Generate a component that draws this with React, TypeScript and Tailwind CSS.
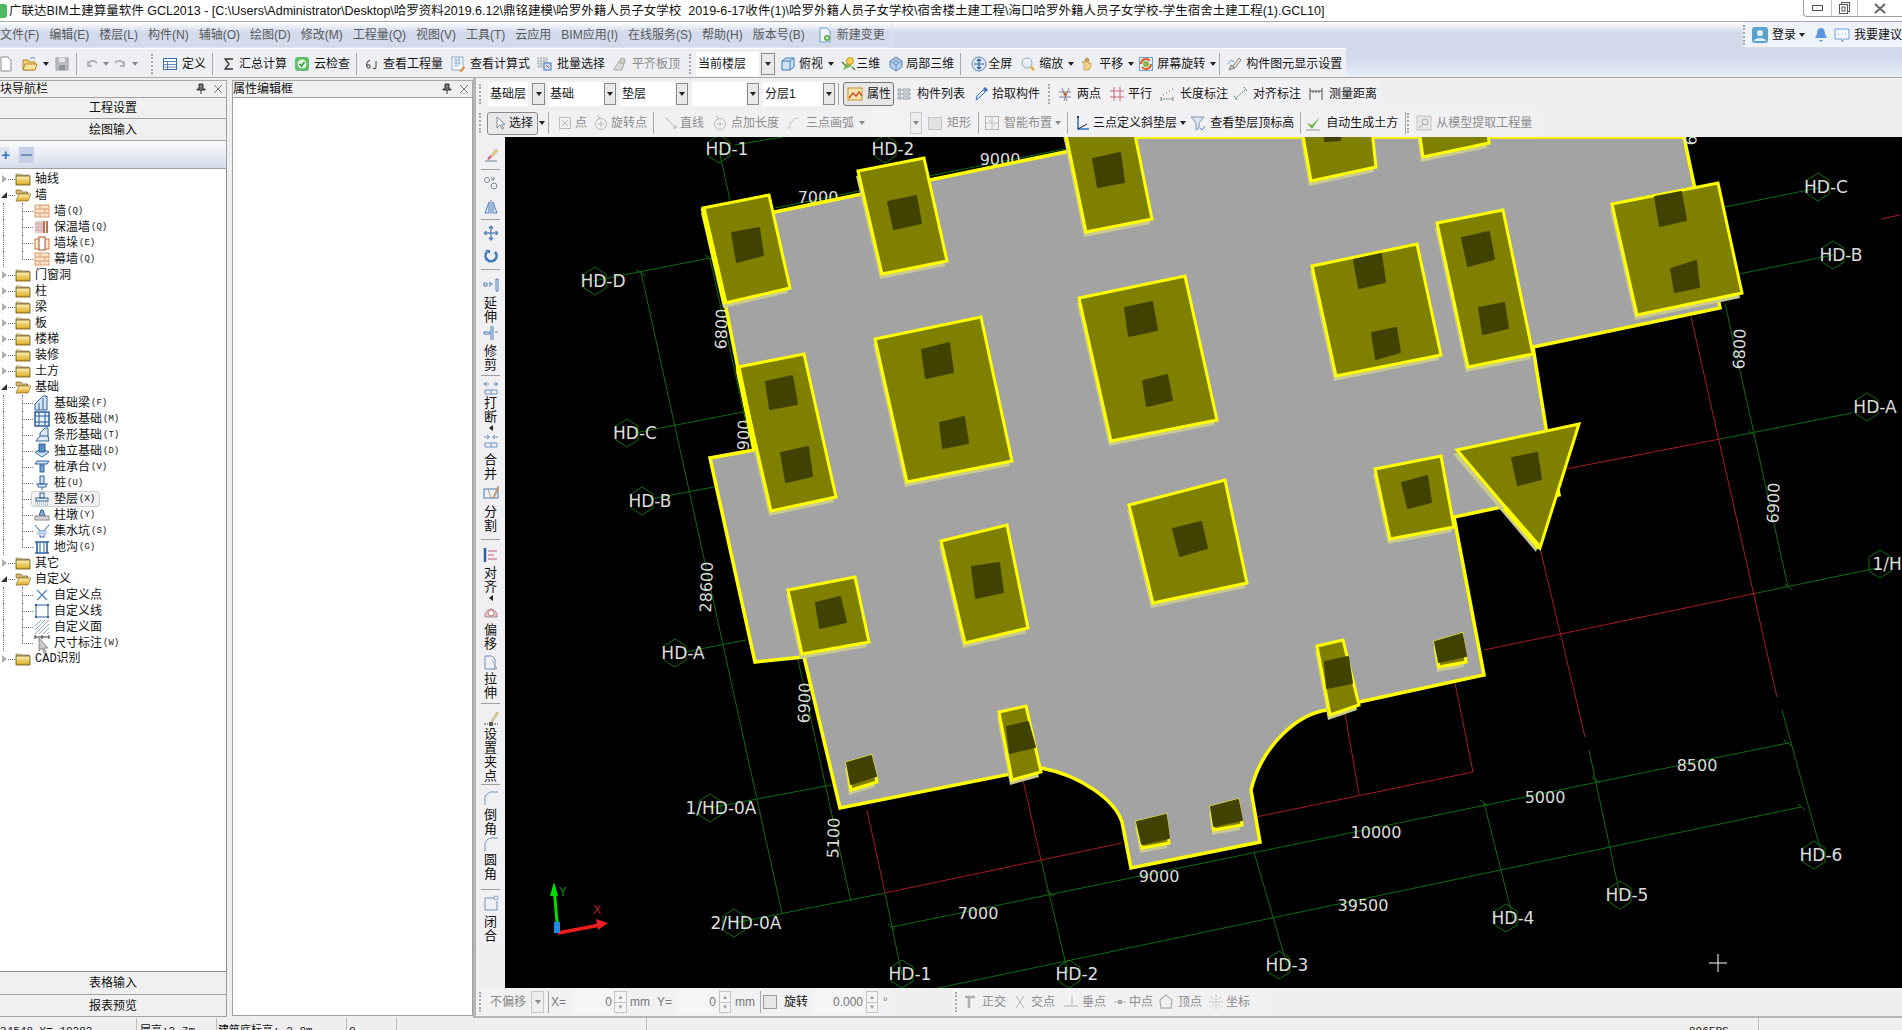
import React from "react";

const FONT = "[font-family:'Liberation_Sans','Noto_Sans_CJK_SC',sans-serif]";

const B = "#2b5f9e";
const glyphs: Record<string, React.ReactNode> = {
  new: <path d="M1 1h7l3 3v11H1z" fill="#fff" stroke="#8a8a8a" />,
  open: (<g><path d="M1 4h5l1 2h6v8H1z" fill="#f0d27a" stroke="#b58a2a" /><path d="M3 8h12l-2 6H1z" fill="#f7e3a0" stroke="#b58a2a" /><path d="M8 3c2-2 4-2 5 0" fill="none" stroke="#4a7fc0" /></g>),
  save: (<g><rect x="2" y="2" width="12" height="12" fill="#b9bcc4" stroke="#9a9da5" /><rect x="5" y="2" width="6" height="4" fill="#e6e6e6" /><rect x="5" y="9" width="6" height="5" fill="#8f939b" /></g>),
  undo: <path d="M4 10c0-5 5-7 9-3M4 5v5h4" fill="none" stroke="#b4b4b8" strokeWidth="2" />,
  redo: <path d="M12 10c0-5-5-7-9-3M12 5v5H8" fill="none" stroke="#b4b4b8" strokeWidth="2" />,
  table: (<g><rect x="1.5" y="2.5" width="13" height="11" fill="#fff" stroke="#3a6ea5" /><path d="M1.5 5.5h13M1.5 8.5h13M1.5 11h13M5.5 5.5v8" stroke="#3a6ea5" strokeWidth=".8" /></g>),
  sigma: <path d="M12 3H4l4 5-4 5h8" fill="none" stroke="#333" strokeWidth="1.3" />,
  cloud: (<g><rect x="1" y="1" width="14" height="14" rx="3" fill="#63bd6a" /><circle cx="8" cy="8" r="4.5" fill="#dff3e0" /><path d="M5.5 8l2 2 3-4" fill="none" stroke="#2f9a3a" strokeWidth="1.5" /></g>),
  six: <path d="M6 4C3 6 2 9 3 11s4 1 3-1-3-1-3 0M12 5v6c0 2-2 2-3 1" fill="none" stroke="#555" strokeWidth="1.1" />,
  calc: (<g><rect x="2" y="1" width="11" height="13" fill="#fff" stroke="#8aa5c8" /><path d="M4 4h7M4 7h7M4 10h4M6 1v9M9 1v9" stroke="#7fa0c9" strokeWidth=".8" /><path d="M9 15l5-5 1 2-4 4z" fill="#e08a2c" /></g>),
  batch: (<g><path d="M1 2h9v9H1z" fill="none" stroke="#8a8a8a" strokeDasharray="1.5 1" /><path d="M1 5h9M1 8h9M4 2v9M7 2v9" stroke="#9aa" strokeWidth=".8" /><rect x="7" y="7" width="7" height="7" fill="#cfe0f5" stroke="#3a76c0" /><path d="M9 9l3 3" stroke="#d04a20" /></g>),
  flat: (<g><path d="M2 13l6-9 5 1-3 9H2z" fill="#d8d8d8" stroke="#aaa" /><path d="M9 2l4 1-2 5-3-1z" fill="#c6d6c0" stroke="#aaa" /></g>),
  box: (<g><path d="M2 5l4-3h8v9l-4 3H2z" fill="#cfe3f5" stroke="#3d7ab8" /><path d="M2 5h8v9M10 5l4-3" fill="none" stroke="#3d7ab8" /></g>),
  three: (<g><path d="M3 14l4-8 5 4z" fill="#7dbb4e" /><circle cx="10" cy="5" r="3.5" fill="#f4cf58" stroke="#c99a1e" /><path d="M2 6l4 4M12 11l3 3" stroke="#4a8a2c" strokeWidth="1.5" /></g>),
  part: (<g><path d="M8 1l6 4v6l-6 4-6-4V5z" fill="#b7cfe9" stroke="#5f86b3" /><path d="M2 5l6 4 6-4M8 9v6M5 3l6 4M11 3L5 7" fill="none" stroke="#5f86b3" strokeWidth=".8" /></g>),
  full: (<g><circle cx="8" cy="8" r="7" fill="#dce7f5" stroke="#5f86b3" /><path d="M8 3v10M3 8h10M8 3L6 5M8 3l2 2M8 13l-2-2M8 13l2-2" fill="none" stroke="#2b5f9e" strokeWidth="1.1" /></g>),
  zoom: (<g><circle cx="7" cy="7" r="5" fill="#e8eef6" stroke="#8ea6c4" /><path d="M11 11l3 3" stroke="#e2b13c" strokeWidth="2.5" /><path d="M4 4h6" stroke="#fff" /></g>),
  pan: (<g><path d="M4 14V8L2 6l1-1 2 2V3h1v3V2h1v4V2h1v4V3h1v5l2-1v3l-2 4z" fill="#f3d38a" stroke="#bb9342" strokeWidth=".7" /></g>),
  rotate: (<g><path d="M3 8a5 5 0 0 1 9-3M13 8a5 5 0 0 1-9 3" fill="none" stroke="#e35a2b" strokeWidth="2" /><circle cx="8" cy="8" r="3" fill="#7dbb4e" /><rect x="1.5" y="1.5" width="13" height="13" fill="none" stroke="#6d9ed4" /></g>),
  show: (<g><path d="M3 14l2-5 4 3z" fill="#c9b9a5" stroke="#888" /><path d="M7 10l6-8 2 2-6 8z" fill="#e7e0d0" stroke="#8a8a8a" /><path d="M2 8l3-4 3 2" fill="none" stroke="#6d9ed4" /></g>),
  attr: (<g><rect x="1" y="2" width="14" height="12" fill="#f6e3ad" stroke="#c6962a" /><path d="M2 12l4-5 3 3 3-4 3 4" fill="none" stroke="#c6532a" strokeWidth="1.5" /></g>),
  list: <path d="M2 3h3v2H2zM2 7h3v2H2zM2 11h3v2H2zM7 3h7v2H7zM7 7h7v2H7zM7 11h7v2H7z" fill="none" stroke="#7c8894" strokeWidth=".8" />,
  pick: (<g><path d="M3 14l1-4 6-6 2 2-6 6z" fill="#dfeafb" stroke="#3d6fb8" /><path d="M10 3l2-2 3 3-2 2z" fill="#3d6fb8" /></g>),
  two: (<g><path d="M5 2l5 13M12 2L7 15M2 6h12M2 11h12" stroke="#7a8593" fill="none" /><circle cx="8" cy="8" r="1.5" fill="#d8562a" /></g>),
  par: <path d="M5 1v14M11 1v14M1 5h14M1 11h14" stroke="#c06a7a" fill="none" />,
  len: <path d="M2 13h12M2 11v4M14 11v4M4 9h1M7 7h1M10 5h1M13 3h1" stroke="#4a6a55" fill="none" strokeDasharray="1.5 1" />,
  ali: <path d="M2 13L13 3M1 10l3 4M11 1l3 4" stroke="#4a8a55" fill="none" strokeDasharray="2 1" />,
  meas: <path d="M2 5h12M2 2v12M14 2v12M5 5v2M8 5v2M11 5v2" stroke="#555" fill="none" />,
  cursor: <path d="M5 2v11l3-3 2 4 1.5-.7-2-4H13z" fill="#fff" stroke="#7d8a9a" />,
  cross: (<g><rect x="2.5" y="2.5" width="11" height="11" fill="none" stroke="#bcbcbc" /><path d="M5 5l6 6M11 5l-6 6" stroke="#b8b8b8" /></g>),
  rotp: (<g><circle cx="8" cy="9" r="5.5" fill="none" stroke="#bbb" /><path d="M8 6v6M5 9h6" stroke="#bbb" /><path d="M4 1l3 2-3 2" fill="none" stroke="#bbb" /></g>),
  line: <path d="M2 2l11 11M13 13h-3M13 13v-3" stroke="#b4b4b4" fill="none" />,
  arc: <path d="M3 14c0-6 4-11 10-11" stroke="#b4b4b4" fill="none" strokeDasharray="3 1" />,
  smart: (<g><rect x="1.5" y="1.5" width="13" height="13" fill="none" stroke="#b4b4b4" /><path d="M8 2v12M2 8h12M5 5l6 6" stroke="#c2c2c2" /></g>),
  slope: (<g><path d="M3 1v13h11" fill="none" stroke="#2b6fc0" strokeWidth="1.5" /><path d="M3 14l9-5" stroke="#222" /><circle cx="3" cy="2" r="1" fill="#222" /></g>),
  top: (<g><path d="M1 2h13L9 8v5l-3 2V8z" fill="#dbe6f2" stroke="#7f97b3" /><path d="M10 13l2 2 3-4" fill="none" stroke="#4a90d0" /></g>),
  auto: (<g><path d="M2 8l5 6 8-12-8 8z" fill="#6fb44a" /><path d="M1 15h14" stroke="#9a9a9a" /></g>),
  model: (<g><rect x="1" y="1" width="14" height="14" fill="#e6e6e6" stroke="#c4c4c4" /><circle cx="9" cy="7" r="3" fill="none" stroke="#aaa" /><path d="M7 9l-4 4" stroke="#aaa" /></g>),
  ortho: (<g><path d="M2 3h10M6 3v11" stroke="#b0b0b0" strokeWidth="2.5" fill="none" /></g>),
  inter: <path d="M4 2l8 12M12 2L4 14" stroke="#b4b4b4" fill="none" />,
  perp: <path d="M1 12h14M9 2v9" stroke="#b4b4b4" fill="none" />,
  mid: (<g><path d="M2 8h12" stroke="#b4b4b4" /><rect x="6" y="6" width="4" height="4" fill="#a8a8a8" /></g>),
  vert: <path d="M8 1l6 5-1 8H3L2 6z" fill="none" stroke="#b4b4b4" strokeWidth="1.4" />,
  coord: <path d="M8 1v14M1 8h14M3 3l3 3M13 3l-3 3M3 13l3-3M13 13l-3-3" stroke="#bcbcbc" fill="none" strokeDasharray="2 1" />,
  doc: (<g><path d="M3 1h7l3 3v11H3z" fill="#eef5fc" stroke="#6f9ccc" /><circle cx="10" cy="11" r="3" fill="#58a83c" /><path d="M8.5 11h3M10 9.5v3" stroke="#fff" /></g>),
  user: (<g><rect x="0" y="0" width="16" height="16" rx="3" fill="#5aa3cf" /><circle cx="8" cy="6" r="3" fill="#e3f2fa" /><path d="M2 14c1-4 11-4 12 0z" fill="#e3f2fa" /></g>),
  bell: <path d="M8 1c3 0 4 3 4 6l2 4H2l2-4c0-3 1-6 4-6zM6 13h4l-2 2z" fill="#5a97e0" />,
  chat: (<g><path d="M1 2h14v10h-5l-2 3v-3H1z" fill="#f4f8fd" stroke="#6f9ed4" /><path d="M4 7h1M7.5 7h1M11 7h1" stroke="#6f9ed4" /></g>),
  brush: (<g><path d="M2 14h12" stroke="#6c7a8c" /><path d="M4 12l3-4 2 2-3 3z" fill="#c86b8a" /><path d="M8 8l5-6 2 2-6 6z" fill="#e8d27c" stroke="#a89a5a" strokeWidth=".5" /></g>),
  copy: (<g><circle cx="4" cy="5" r="2.5" fill="none" stroke="#7d8a9a" /><circle cx="11" cy="11" r="3" fill="none" stroke="#7d8a9a" /><path d="M8 2l3 3M11 2v3H8" stroke="#7d8a9a" fill="none" /></g>),
  mirror: <path d="M8 1v14M6 3L2 14h4zM10 3l4 11h-4z" fill="#d9e5f3" stroke="#4f7fb8" />,
  move: <path d="M8 1v14M1 8h14M8 1L6 3.5M8 1l2 2.5M8 15l-2-2.5M8 15l2-2.5M1 8l2.5-2M1 8l2.5 2M15 8l-2.5-2M15 8l-2.5 2" stroke="#5b84b8" fill="none" strokeWidth="1.4" />,
  rot: (<g><path d="M12 5a5.5 5.5 0 1 1-8 0" fill="none" stroke="#3f7cc0" strokeWidth="2.6" /><path d="M2 3h5v4" fill="#3f7cc0" /></g>),
  ext: <path d="M1 6h3v3H1zM7 7h3M7 5v5M13 2h2v12h-2z" fill="none" stroke="#4f7fb8" />,
  trim: <path d="M1 7h6v2H1zM8 1v14M10 1v14M12 7h3" fill="none" stroke="#4f7fb8" />,
  brk: <path d="M1 4h5M15 4h-5M4 2l-3 2 3 2M12 2l3 2-3 2M2 10h12v4H2zM8 10v4" fill="none" stroke="#6d95c4" />,
  mrg: <path d="M6 4H1M10 4h5M4 2l2.5 2L4 6M12 2L9.5 4 12 6M2 10h12v4H2zM8 10v4" fill="none" stroke="#6d95c4" />,
  spl: (<g><rect x="1" y="5" width="14" height="9" fill="none" stroke="#4f7fb8" /><path d="M5 5l3 9M10 14l5-12 1 1-5 11z" fill="#e8c070" stroke="#a87a5a" strokeWidth=".7" /></g>),
  ali2: (<g><path d="M2 1v14" stroke="#2b5f9e" strokeWidth="2.5" /><path d="M5 4h9M5 8h6M5 12h9" stroke="#c2567a" strokeWidth="1.2" /></g>),
  off: (<g><path d="M2 12c-1-4 3-8 6-8s7 4 6 8z" fill="#f1c6c0" stroke="#9a8a9a" /><circle cx="8" cy="8" r="3" fill="#fff" stroke="#c77" /></g>),
  str: (<g><path d="M2 1h7l3 3v10H2z" fill="none" stroke="#6d95c4" /><path d="M9 5l5 9H9" stroke="#888" fill="none" strokeDasharray="1.5 1" /></g>),
  grip: (<g><path d="M1 14h4M11 14h4" stroke="#555" strokeDasharray="2 1" /><rect x="6" y="12" width="4" height="4" fill="#555" /><path d="M8 11l6-9 1.5 1-6 9z" fill="#e6d9a0" stroke="#a89a6a" strokeWidth=".6" /></g>),
  cham: <path d="M2 15V6l5-4h8" fill="none" stroke="#6d95c4" />,
  fil: <path d="M2 15V9c0-4 3-7 7-7h6" fill="none" stroke="#6d95c4" />,
  close: (<g><path d="M11 3H2v12h12V6" fill="none" stroke="#6d95c4" /><circle cx="13" cy="3" r="2" fill="#fff" stroke="#6d95c4" /></g>),
};

const Ico = ({ n, w = 16 }: { n: string; w?: number }) => (
  <svg width={w} height={16} viewBox={`0 0 ${w} 16`} className="shrink-0">
    {glyphs[n]}
  </svg>
);

const Caret = ({ cls = "", dark = false }: { cls?: string; dark?: boolean }) => (
  <span className={`w-0 h-0 shrink-0 border-x-[3px] border-t-[4px] border-x-transparent ${dark ? "border-t-[#222]" : "border-t-[#888]"} ${cls}`} />
);
const Grip = ({ cls = "" }: { cls?: string }) => <span className={`w-[3px] h-[20px] shrink-0 border-l-2 border-dotted border-[#a9a9a9] ${cls}`} />;
const Sep = ({ cls = "" }: { cls?: string }) => <span className={`w-px h-[22px] shrink-0 bg-[#a8a8a8] ${cls}`} />;
const Tool = ({ cls = "", icon, label, off = false }: { cls?: string; icon: string; label: string; off?: boolean }) => (
  <div className={`flex items-center shrink-0 ${off ? "text-[#8c8c8c]" : "text-[#161616]"} ${cls}`}>
    <Ico n={icon} />
    <span className="whitespace-nowrap">{label}</span>
  </div>
);
const Combo = ({ cls = "", text = "", arrowCls = "", dim = false }: { cls?: string; text?: string; arrowCls?: string; dim?: boolean }) => (
  <>
    <div className={`h-[24px] shrink-0 flex items-center pl-[2px] ${dim ? "bg-[#f2f2f2] text-[#888]" : "bg-white text-[#161616]"} ${cls}`}>{text}</div>
    <div className={`h-[22px] shrink-0 flex items-center justify-center border ${dim ? "border-[#c8c8c8] bg-[#eeeeee]" : "border-[#8a8a8a] bg-[#e9e9e9]"} ${arrowCls}`}>
      <Caret dark={!dim} />
    </div>
  </>
);
const Spin = ({ cls = "" }: { cls?: string }) => (
  <div className={`h-[22px] shrink-0 flex flex-col border border-[#c4c4c4] bg-[#f4f4f4] ${cls}`}>
    <span className="flex-1 flex items-center justify-center border-b border-[#c4c4c4] text-[6px] leading-none text-[#999]">▲</span>
    <span className="flex-1 flex items-center justify-center text-[6px] leading-none text-[#999]">▼</span>
  </div>
);
const Num = ({ cls = "", v }: { cls?: string; v: string }) => (
  <div className={`h-[24px] shrink-0 bg-[#f5f5f5] text-[#777] flex items-center justify-end pr-[2px] ${cls}`}>{v}</div>
);

type Row = { t: string; k?: string; lvl: 0 | 1; icon?: string; open?: boolean; guide?: boolean; last?: boolean; sel?: boolean; mono?: boolean };
const rows: Row[] = [
  { t: "轴线", lvl: 0 },
  { t: "墙", lvl: 0, open: true },
  { t: "墙", k: "(Q)", lvl: 1, icon: "wall", guide: true },
  { t: "保温墙", k: "(Q)", lvl: 1, icon: "ins", guide: true },
  { t: "墙垛", k: "(E)", lvl: 1, icon: "dbl", guide: true },
  { t: "幕墙", k: "(Q)", lvl: 1, icon: "wall", guide: true, last: true },
  { t: "门窗洞", lvl: 0 },
  { t: "柱", lvl: 0 },
  { t: "梁", lvl: 0 },
  { t: "板", lvl: 0 },
  { t: "楼梯", lvl: 0 },
  { t: "装修", lvl: 0 },
  { t: "土方", lvl: 0 },
  { t: "基础", lvl: 0, open: true },
  { t: "基础梁", k: "(F)", lvl: 1, icon: "beam", guide: true },
  { t: "筏板基础", k: "(M)", lvl: 1, icon: "raft", guide: true },
  { t: "条形基础", k: "(T)", lvl: 1, icon: "strip", guide: true },
  { t: "独立基础", k: "(D)", lvl: 1, icon: "ind", guide: true },
  { t: "桩承台", k: "(V)", lvl: 1, icon: "cap", guide: true },
  { t: "桩", k: "(U)", lvl: 1, icon: "pile", guide: true },
  { t: "垫层", k: "(X)", lvl: 1, icon: "pad", guide: true, sel: true },
  { t: "柱墩", k: "(Y)", lvl: 1, icon: "pier", guide: true },
  { t: "集水坑", k: "(S)", lvl: 1, icon: "sump", guide: true },
  { t: "地沟", k: "(G)", lvl: 1, icon: "trench", guide: true, last: true },
  { t: "其它", lvl: 0 },
  { t: "自定义", lvl: 0, open: true },
  { t: "自定义点", lvl: 1, icon: "cpt", guide: true },
  { t: "自定义线", lvl: 1, icon: "cln", guide: true },
  { t: "自定义面", lvl: 1, icon: "cfc", guide: true },
  { t: "尺寸标注", k: "(W)", lvl: 1, icon: "dim", guide: true, last: true },
  { t: "CAD识别", lvl: 0, mono: true },
];

const treeIcons: Record<string, React.ReactNode> = {
  wall: (<g><rect x="1" y="2" width="14" height="12" fill="#fbe3cf" stroke="#d79a6a" /><path d="M1 6h14M1 10h14M6 2v4M11 6v4M6 10v4" stroke="#d79a6a" /></g>),
  ins: (<g><rect x="1" y="2" width="8" height="12" fill="#e5c9cb" /><path d="M1 5h8M1 8h8M1 11h8" stroke="#cfa9a9" /><path d="M10 2v12M13 2v12" stroke="#b34a2a" strokeWidth="1.6" /></g>),
  dbl: (<g><rect x="1" y="4" width="14" height="10" fill="#fbe3cf" stroke="#c97a3a" /><rect x="5" y="2" width="6" height="13" fill="#fff" stroke="#b34a2a" /></g>),
  beam: (<g><path d="M1 15V9l8-8h4v14z" fill="#d7e5f5" stroke={B} /><path d="M5 15V8M9 15V3" stroke={B} /></g>),
  raft: (<g><rect x="1" y="1" width="14" height="14" fill="#e8f0fa" stroke={B} strokeWidth="1.5" /><path d="M1 5h14M1 11h14M5 1v14M11 1v14" stroke={B} /></g>),
  strip: (<g><path d="M6 9V6l5-5h3v8M2 14l4-5h8l1 5z" fill="#e1ebf7" stroke={B} /></g>),
  ind: (<g><path d="M1 9l7-3 7 3-7 5z" fill="#dce8f6" stroke={B} /><rect x="5" y="1" width="6" height="8" fill="#5c8cc4" stroke={B} /></g>),
  cap: (<g><path d="M1 5l2-3h12l-2 3z" fill="#cfdff2" stroke={B} /><rect x="6" y="6" width="4" height="7" fill="#7ba5d6" stroke={B} /></g>),
  pile: (<g><rect x="6" y="1" width="4" height="8" fill="#cfdff2" stroke={B} /><path d="M2 9h12M4 9v3h8V9M8 12v3" stroke={B} fill="none" /></g>),
  pad: (<g><rect x="6" y="2" width="4" height="5" fill="none" stroke={B} /><rect x="2" y="7" width="12" height="3" fill="none" stroke={B} /><path d="M1 12h14M1 14h14" stroke="#7ea6d8" strokeDasharray="1 1" /></g>),
  pier: (<g><path d="M7 3h2l2 6H5z" fill="#8fa9cc" stroke={B} /><rect x="1" y="9" width="14" height="4" fill="#d6d6d6" stroke="#888" /></g>),
  sump: (<g><path d="M1 2l5 6h4l5-6M6 8v6h4V8" fill="none" stroke={B} /><path d="M3 8h10v4H3z" fill="#bcd4ee" /></g>),
  trench: (<g><path d="M1 3h14M3 3v11M13 3v11M1 14h14" fill="none" stroke={B} strokeWidth="1.6" /><path d="M6 4v9M10 4v9" stroke={B} /></g>),
  cpt: <path d="M3 3l10 10M13 3L3 13" stroke="#4f7fb8" strokeWidth="1.2" />,
  cln: (<g><rect x="2" y="2" width="12" height="12" fill="none" stroke={B} /><path d="M1 1h2v2H1zM13 1h2v2h-2zM1 13h2v2H1zM13 13h2v2h-2z" fill={B} /></g>),
  cfc: <path d="M1 7l6-6M1 11L11 1M1 15L15 1M5 15L15 5M9 15l6-6M13 15l2-2" stroke="#8fa6c0" />,
  dim: <path d="M1 2h14M1 0v4M8 0v4M15 0v4" stroke="#333" />,
};

const Folder = ({ open }: { open?: boolean }) => (
  <svg width="16" height="14" viewBox="0 0 16 14" className="shrink-0">
    <defs>
      <linearGradient id="fg" x1="0" y1="0" x2="0" y2="1">
        <stop offset="0" stopColor="#fff2b0" />
        <stop offset="1" stopColor="#d9a520" />
      </linearGradient>
    </defs>
    {open ? (
      <g>
        <path d="M1 2h5l1 2h6v2H1z" fill="#d7b86a" stroke="#6e5a20" strokeWidth=".6" />
        <path d="M4 6h12l-3 7H1z" fill="url(#fg)" stroke="#6e5a20" strokeWidth=".6" />
      </g>
    ) : (
      <g>
        <path d="M1 2h5l1 1h7v1H1z" fill="#eadca0" stroke="#6e5a20" strokeWidth=".5" />
        <rect x="1" y="4" width="14" height="9" fill="url(#fg)" stroke="#4e4010" strokeWidth=".7" />
      </g>
    )}
  </svg>
);

const TreeRow = ({ r }: { r: Row }) => (
  <div className="relative h-[16px] flex items-center text-[#141414]">
    {r.guide && <span className="absolute left-[3px] top-0 h-[16px] border-l border-dotted border-[#777]" />}
    {r.lvl === 1 ? (
      <>
        <span className={`absolute left-[22px] top-0 border-l border-dotted border-[#777] ${r.last ? "h-[8px]" : "h-[16px]"}`} />
        <span className="absolute left-[22px] top-[8px] w-[11px] border-t border-dotted border-[#777]" />
        {r.sel && <span className="absolute left-[31px] top-0 w-[69px] h-[16px] border border-[#d0d0d0] rounded-[3px] bg-[#f2f2f2]" />}
        <svg width="16" height="16" viewBox="0 0 16 16" className="relative ml-[34px] shrink-0">
          {treeIcons[r.icon as string]}
        </svg>
        <span className="relative ml-[4px] whitespace-nowrap">{r.t}</span>
        {r.k && <span className="relative ml-[1px] text-[9px] [font-family:'Liberation_Mono',monospace]">{r.k}</span>}
        {r.icon === "dim" && (
          <svg width="12" height="16" viewBox="0 0 12 16" className="absolute left-[38px] top-[3px]">
            <path d="M1 0v13l3-3 2 5 2-1-2-4h4z" fill="#c8c8c8" stroke="#8c8c8c" />
          </svg>
        )}
      </>
    ) : (
      <>
        {r.open ? (
          <span className="ml-[1px] w-0 h-0 shrink-0 border-l-[6px] border-b-[6px] border-l-transparent border-b-[#333]" />
        ) : (
          <span className="ml-[2px] w-0 h-0 shrink-0 border-y-[4px] border-l-[5px] border-y-transparent border-l-[#b0b0b0]" />
        )}
        <span className="ml-[1px] w-[7px] border-t border-dotted border-[#777]" />
        <Folder open={r.open} />
        <span className={`ml-[4px] whitespace-nowrap ${r.mono ? "[font-family:'Liberation_Mono','Noto_Sans_CJK_SC',monospace]" : ""}`}>{r.t}</span>
      </>
    )}
  </div>
);

const PanelHead = ({ title, cls = "" }: { title: string; cls?: string }) => (
  <div className={`h-[17px] flex items-center justify-between border-t border-x border-[#a8a8a8] bg-[#f0f0f0] text-[#111] ${cls}`}>
    <span>{title}</span>
    <span className="flex items-center gap-[7px] pr-[3px]">
      <svg width="10" height="12" viewBox="0 0 10 12"><path d="M3 1h4v5h2v1H1V6h2zM5 7v4" stroke="#333" fill="#777" /></svg>
      <svg width="10" height="10" viewBox="0 0 10 10"><path d="M1 1l8 8M9 1l-8 8" stroke="#777" /></svg>
    </span>
  </div>
);

const NavBtn = ({ t, cls = "" }: { t: string; cls?: string }) => (
  <div className={`flex items-center justify-center bg-[#f0f0f0] border-b border-r border-[#a0a0a0] text-[#111] ${cls}`}>{t}</div>
);

/* ---- vertical toolbar ---- */
const VI = ({ n, cls = "" }: { n: string; cls?: string }) => (
  <div className={`shrink-0 h-[16px] ${cls}`}><Ico n={n} /></div>
);
const VS = ({ cls = "" }: { cls?: string }) => <span className={`shrink-0 w-[19px] h-px bg-[#a0a0a0] ${cls}`} />;
const VT = ({ t, cls = "" }: { t: string; cls?: string }) => (
  <div className={`shrink-0 w-[13px] text-[13px] leading-[14px] break-all text-[#111] text-center ${cls}`}>{t}</div>
);
const VC = ({ cls = "" }: { cls?: string }) => (
  <span className={`shrink-0 w-0 h-0 border-y-[3px] border-r-[4px] border-y-transparent border-r-[#222] ${cls}`} />
);

/* ---- canvas ---- */
type Pad = { p: string; d?: string[] };
const pads: Pad[] = [
  { p: "703,208 769,195 790,288 725,303", d: ["732,233 759,228 763,255 737,262"] },
  { p: "858,171 924,158 947,261 882,274", d: ["888,202 916,196 921,223 894,229"] },
  { p: "1065,130 1134,130 1152,219 1086,232", d: ["1093,159 1120,153 1124,182 1098,187"] },
  { p: "1302,130 1372,130 1376,167 1311,181", d: ["1324,130 1341,130 1340,140 1325,141"] },
  { p: "1419,130 1488,130 1489,143 1423,157" },
  { p: "738,367 804,354 836,497 771,511", d: ["766,382 792,376 797,404 770,409", "781,453 808,447 812,476 786,482"] },
  { p: "875,339 981,317 1012,461 907,482", d: ["922,350 949,343 953,372 926,378", "940,423 964,417 968,443 943,448"] },
  { p: "1079,298 1185,276 1217,420 1111,441", d: ["1125,308 1152,302 1157,330 1129,336", "1143,381 1167,375 1172,400 1147,406"] },
  { p: "1312,266 1417,244 1441,355 1336,376", d: ["1354,260 1381,254 1385,282 1359,288", "1372,333 1396,328 1400,352 1376,359"] },
  { p: "1437,223 1503,210 1533,354 1468,367", d: ["1462,238 1489,232 1494,259 1468,266", "1479,308 1504,303 1508,328 1483,334"] },
  { p: "1612,204 1718,183 1742,293 1637,315", d: ["1655,197 1681,192 1686,220 1660,226", "1671,269 1696,261 1699,287 1675,292"] },
  { p: "1375,469 1441,456 1454,527 1390,539", d: ["1402,483 1427,476 1431,502 1408,508"] },
  { p: "941,541 1007,525 1028,628 965,643", d: ["972,567 999,563 1003,592 976,598"] },
  { p: "1129,505 1225,480 1247,583 1153,603", d: ["1173,529 1201,522 1207,548 1180,556"] },
  { p: "788,590 855,577 869,642 802,654", d: ["816,603 840,597 846,622 820,628"] },
  { p: "999,712 1026,706 1041,772 1012,780", d: ["1007,727 1028,722 1035,747 1010,753"] },
  { p: "1317,646 1343,640 1359,705 1330,715", d: ["1325,662 1348,657 1352,683 1327,688"] },
  { p: "847,763 871,756 877,782 851,790", d: ["847,763 871,756 876,776 851,784"] },
  { p: "1435,642 1462,634 1466,662 1439,667", d: ["1435,642 1462,634 1466,656 1439,662"] },
  { p: "1137,822 1166,815 1169,843 1142,848", d: ["1137,822 1166,815 1169,838 1142,844"] },
  { p: "1211,807 1238,800 1242,825 1214,830", d: ["1211,807 1238,800 1242,820 1214,826"] },
];
const greens: number[][] = [
  [719, 150, 730, 200], [735, 145, 783, 137], [775, 208, 859, 191], [929, 176, 1065, 149],
  [593, 281, 710, 258], [641, 272, 782, 913], [710, 258, 851, 902], [635, 433, 743, 412],
  [650, 499, 714, 487], [685, 652, 746, 640], [1818, 188, 1725, 207], [1833, 255, 1739, 274],
  [1852, 413, 1720, 439], [1684, 137, 1694, 185], [1725, 303, 1788, 587], [710, 808, 831, 785],
  [734, 923, 885, 893], [885, 893, 902, 975], [1041, 860, 1068, 973], [1254, 852, 1287, 965],
  [1484, 803, 1513, 918], [1589, 750, 1620, 895], [1782, 710, 1822, 855], [892, 927, 1788, 743],
  [938, 988, 1801, 807], [1757, 593, 1877, 568], [636, 270, 646, 276], [705, 255, 716, 262],
  [1785, 584, 1792, 590], [1748, 430, 1755, 436], [1784, 740, 1792, 746], [1798, 804, 1805, 810],
  [888, 924, 895, 930], [1046, 890, 1054, 896], [1480, 800, 1488, 806], [1592, 777, 1600, 783],
];
const reds: number[][] = [
  [867, 810, 885, 893], [1023, 780, 1041, 860], [1345, 713, 1359, 795], [1455, 683, 1473, 772],
  [1540, 548, 1585, 737], [1691, 317, 1777, 697], [885, 893, 1122, 843], [1256, 817, 1473, 772],
  [1484, 650, 1757, 593], [1566, 469, 1720, 439], [1881, 219, 1900, 215],
];
const hexLabels: [string, number, number, number?][] = [
  ["HD-1", 727, 149], ["HD-2", 893, 149], ["HD-C", 1826, 187], ["HD-B", 1841, 255], ["HD-A", 1875, 407],
  ["HD-D", 603, 281], ["HD-C", 635, 433], ["HD-B", 650, 501], ["HD-A", 683, 653],
  ["1/HD-0A", 721, 808, 710], ["2/HD-0A", 746, 923, 734],
  ["HD-1", 910, 974], ["HD-2", 1077, 974], ["HD-3", 1287, 965, 1279], ["HD-4", 1513, 918, 1506],
  ["HD-5", 1627, 895, 1620], ["HD-6", 1821, 855, 1814], ["1/HD-0A", 1908, 564, 1880],
];
const dims: [string, number, number][] = [
  ["7000", 818, 197], ["9000", 1000, 159], ["7000", 978, 913], ["9000", 1159, 876], ["10000", 1376, 832],
  ["5000", 1545, 797], ["8500", 1697, 765], ["39500", 1363, 905],
];
const vdims: [string, number, number][] = [
  ["6800", 721, 329], ["6900", 743, 440], ["28600", 706, 587], ["6900", 804, 703], ["5100", 833, 838],
  ["6800", 1739, 349], ["6900", 1773, 503],
];
const SLAB =
  "M712 225 L1065 152 L1140 137 L1684 137 L1720 308 L1533 347 L1546 428 L1559 495 L1454 517 L1484 675 L1359 702 L1327 710 " +
  "C1298 714 1262 745 1251 790 L1260 842 L1131 868 L1122 822 C1115 800 1080 775 1041 768 L840 808 L804 657 L755 662 L710 458 L754 450 L725 303 Z";

const Canvas = () => (
  <svg width="1397" height="851" viewBox="505 137 1397 851" className="block shrink-0 bg-black" fontFamily="'DejaVu Sans', sans-serif">
    {greens.map((l, i) => <line key={i} x1={l[0]} y1={l[1]} x2={l[2]} y2={l[3]} stroke="#0f6d0f" />)}
    {reds.map((l, i) => <line key={i} x1={l[0]} y1={l[1]} x2={l[2]} y2={l[3]} stroke="#a81c1c" />)}
    {hexLabels.map(([t, x, y, hx], i) => {
      const cx = hx ?? x - 8;
      return <polygon key={i} points={`${cx},${y - 14} ${cx + 11},${y - 7} ${cx + 11},${y + 7} ${cx},${y + 14} ${cx - 11},${y + 7} ${cx - 11},${y - 7}`} fill="none" stroke="#0f6d0f" />;
    })}
    {hexLabels.map(([t, x, y], i) => (
      <text key={i} x={x} y={y + 6} textAnchor="middle" fontSize="17" fill="#dcdcdc">{t}</text>
    ))}
    {dims.map(([t, x, y], i) => (
      <text key={i} x={x} y={y + 6} textAnchor="middle" fontSize="16" fill="#dcdcdc">{t}</text>
    ))}
    {vdims.map(([t, x, y], i) => (
      <text key={i} transform={`translate(${x},${y}) rotate(-88)`} y="6" textAnchor="middle" fontSize="16" fill="#dcdcdc">{t}</text>
    ))}
    <path d={SLAB} fill="#a3a3a3" stroke="#ffff00" strokeWidth="3.5" strokeLinejoin="miter" />
    <text transform="translate(1691,125) rotate(-88)" y="6" textAnchor="middle" fontSize="16" fill="#dcdcdc">6800</text>
    {pads.map((a, i) => (
      <polygon key={i} points={a.p} transform="translate(-2,5)" fill="#c9c992" />
    ))}
    <polygon points="1457,450 1579,424 1540,548" transform="translate(-4,4)" fill="#c9c992" />
    {pads.map((a, i) => (
      <g key={i}>
        <polygon points={a.p} fill="#808000" stroke="#ffff00" strokeWidth="3" />
        {a.d && a.d.map((d, j) => <polygon key={j} points={d} fill="#424200" stroke="#424200" strokeWidth="2" strokeLinejoin="round" />)}
      </g>
    ))}
    <polygon points="1457,450 1579,424 1540,548" fill="#808000" stroke="#ffff00" strokeWidth="3" />
    <line x1="1505" y1="508" x2="1540" y2="548" stroke="#ffff00" strokeWidth="5" />
    <polygon points="1512,458 1537,453 1541,479 1518,485" fill="#424200" stroke="#424200" strokeWidth="2" strokeLinejoin="round" />
    <line x1="703" y1="208" x2="725" y2="303" stroke="#ffff00" strokeWidth="5" />
    <line x1="738" y1="367" x2="755" y2="450" stroke="#ffff00" strokeWidth="5" />
    <g>
      <line x1="554" y1="887" x2="558" y2="933" stroke="#00e000" strokeWidth="3" />
      <polygon points="554,882 550,896 558,896" fill="#00e000" />
      <line x1="558" y1="933" x2="600" y2="925" stroke="#ee1c1c" strokeWidth="3.5" />
      <polygon points="608,923 596,919 598,930" fill="#ee1c1c" />
      <rect x="554" y="922" width="6" height="11" fill="#1e88e5" />
      <text x="563" y="896" fontSize="12" fill="#0c8a0c" textAnchor="middle">Y</text>
      <text x="597" y="914" fontSize="12" fill="#a81c1c" textAnchor="middle">X</text>
    </g>
    <path d="M1718 954v18M1709 963h18" stroke="#fff" />
  </svg>
);

const Menu = ({ t }: { t: string }) => <span className="whitespace-nowrap">{t}</span>;

export default function App() {
  return (
    <div className={`w-[1902px] h-[1030px] overflow-hidden flex flex-col bg-[#efefef] text-[12px] leading-[16px] ${FONT}`}>
      {/* title bar */}
      <div className="h-[22px] shrink-0 flex items-center bg-white border-b border-[#a8a8a8] relative">
        <span className="w-[7px] h-[14px] rounded-r-[3px] bg-[#4cb860] shrink-0" />
        <span className="ml-[2px] whitespace-nowrap text-[12.5px] text-[#111]">
          广联达BIM土建算量软件 GCL2013 - [C:\Users\Administrator\Desktop\哈罗资料2019.6.12\鼎铭建模\哈罗外籍人员子女学校&nbsp;&nbsp;2019-6-17收件(1)\哈罗外籍人员子女学校\宿舍楼土建工程\海口哈罗外籍人员子女学校-学生宿舍土建工程(1).GCL10]
        </span>
        <div className="absolute right-0 top-0 w-[99px] h-[17px] flex border-l border-b border-[#a0a0a0] rounded-bl-[4px] bg-white">
          <span className="w-[28px] flex items-center justify-center border-r border-[#c4c4c4]"><span className="w-[11px] h-[6px] border border-[#555]" /></span>
          <span className="w-[26px] flex items-center justify-center border-r border-[#c4c4c4]">
            <svg width="11" height="12" viewBox="0 0 11 12"><rect x="2.5" y=".5" width="8" height="9" fill="none" stroke="#555" /><rect x=".5" y="2.5" width="8" height="9" fill="#fff" stroke="#555" /><rect x="3" y="5" width="3" height="4" fill="none" stroke="#555" /></svg>
          </span>
          <span className="flex-1 flex items-center justify-center">
            <svg width="12" height="11" viewBox="0 0 12 11"><path d="M1 1l10 9M11 1L1 10" stroke="#666" strokeWidth="2" /></svg>
          </span>
        </div>
      </div>

      {/* menu + toolbar band */}
      <div className="h-[56px] shrink-0 flex flex-col bg-[linear-gradient(#ffffff_0,#d3daec_10px,#d3daec_38px,#e8ecf6_54px)] border-b border-[#a8a8a8]">
        <div className="h-[26px] shrink-0 flex items-center justify-between">
          <div className="w-[892px] h-full flex items-center gap-[10px] text-[#5a5a5a] border-r border-b border-[#dfe3ee]">
            <Menu t="文件(F)" /><Menu t="编辑(E)" /><Menu t="楼层(L)" /><Menu t="构件(N)" /><Menu t="辅轴(O)" /><Menu t="绘图(D)" /><Menu t="修改(M)" /><Menu t="工程量(Q)" /><Menu t="视图(V)" /><Menu t="工具(T)" /><Menu t="云应用" /><Menu t="BIM应用(I)" /><Menu t="在线服务(S)" /><Menu t="帮助(H)" /><Menu t="版本号(B)" />
            <span className="flex items-center gap-[4px] ml-[2px]"><Ico n="doc" /><span>新建变更</span></span>
          </div>
          <div className="w-[159px] shrink-0 h-full flex items-center bg-[#eff2f9] text-[#111] border-b border-[#d6dbe8] whitespace-nowrap">
            <Grip />
            <span className="ml-[6px] shrink-0"><Ico n="user" /></span>
            <span className="ml-[4px] shrink-0">登录</span>
            <Caret dark cls="ml-[3px]" />
            <span className="ml-[8px] shrink-0"><Ico n="bell" /></span>
            <span className="ml-[5px] shrink-0"><Ico n="chat" /></span>
            <span className="ml-[4px] shrink-0">我要建议</span>
          </div>
        </div>
        <div className="w-[1346px] h-[29px] shrink-0 flex items-center pt-[1px] bg-[#eeeff3] border-t border-white">
          <Ico n="new" w={12} />
          <span className="ml-[10px]"><Ico n="open" /></span>
          <Caret dark cls="ml-[5px]" />
          <span className="ml-[5px]"><Ico n="save" /></span>
          <Sep cls="ml-[6px]" />
          <span className="ml-[7px]"><Ico n="undo" /></span>
          <Caret cls="ml-[3px]" />
          <span className="ml-[3px]"><Ico n="redo" /></span>
          <Caret cls="ml-[4px]" />
          <Grip cls="ml-[13px]" />
          <Tool cls="ml-[8px] gap-[4px]" icon="table" label="定义" />
          <Sep cls="ml-[6px]" />
          <Tool cls="ml-[8px] gap-[2px]" icon="sigma" label="汇总计算" />
          <Tool cls="ml-[7px] gap-[4px]" icon="cloud" label="云检查" />
          <Sep cls="ml-[6px]" />
          <Tool cls="ml-[7px] gap-[3px]" icon="six" label="查看工程量" />
          <Tool cls="ml-[7px] gap-[4px]" icon="calc" label="查看计算式" />
          <Tool cls="ml-[7px] gap-[4px]" icon="batch" label="批量选择" />
          <Tool cls="ml-[7px] gap-[4px]" icon="flat" label="平齐板顶" off />
          <Grip cls="ml-[9px]" />
          <Combo cls="ml-[4px] w-[63px]" text="当前楼层" arrowCls="ml-[2px] w-[14px]" />
          <Tool cls="ml-[5px] gap-[3px]" icon="box" label="俯视" />
          <Caret dark cls="ml-[5px]" />
          <Tool cls="ml-[6px]" icon="three" label="三维" />
          <Tool cls="ml-[8px] gap-[2px]" icon="part" label="局部三维" />
          <Sep cls="ml-[6px]" />
          <Tool cls="ml-[10px] gap-[1px]" icon="full" label="全屏" />
          <Tool cls="ml-[8px] gap-[3px]" icon="zoom" label="缩放" />
          <Caret dark cls="ml-[5px]" />
          <Tool cls="ml-[6px] gap-[3px]" icon="pan" label="平移" />
          <Caret dark cls="ml-[5px]" />
          <Tool cls="ml-[4px] gap-[3px]" icon="rotate" label="屏幕旋转" />
          <Caret dark cls="ml-[5px]" />
          <Sep cls="ml-[3px]" />
          <Tool cls="ml-[6px] gap-[4px]" icon="show" label="构件图元显示设置" />
        </div>
      </div>

      {/* main */}
      <div className="h-[940px] shrink-0 flex">
        {/* left panel */}
        <div className="w-[227px] shrink-0 flex flex-col pt-[2px]">
          <PanelHead title="块导航栏" cls="border-l-0" />
          <NavBtn t="工程设置" cls="h-[22px] border-t" />
          <NavBtn t="绘图输入" cls="h-[22px]" />
          <div className="h-[28px] shrink-0 flex items-center bg-[linear-gradient(#fbfcfe,#d5dbeb)] border-b border-r border-[#a0a0a0]">
            <span className="w-[10px] h-[16px] flex items-center justify-end bg-[#dfe5f2] text-[#2f78c4] font-bold text-[15px] leading-none overflow-hidden">+</span>
            <span className="ml-[9px] w-[15px] h-[16px] flex items-center justify-center bg-[#c6d0e6]"><span className="w-[11px] h-[2px] bg-[#6f8fc0]" /></span>
          </div>
          <div className="flex-1 bg-white border-r border-b border-[#8c8c8c] min-h-0 overflow-hidden py-[2px]">
            {rows.map((r, i) => <TreeRow key={i} r={r} />)}
          </div>
          <NavBtn t="表格输入" cls="h-[23px] shrink-0" />
          <NavBtn t="报表预览" cls="h-[22px] shrink-0" />
          <div className="h-[1px] shrink-0" />
        </div>

        <div className="w-[5px] shrink-0" />

        {/* property panel */}
        <div className="w-[244px] shrink-0 flex flex-col pt-[2px] pb-[2px] border-r-[3px] border-[#b4b4b4]">
          <PanelHead title="属性编辑框" />
          <div className="flex-1 bg-white border border-[#a0a0a0]" />
        </div>

        {/* right column */}
        <div className="flex-1 min-w-0 flex flex-col pt-[2px]">
          <div className="h-[28px] shrink-0 w-[903px] flex items-center bg-[#f1f1f3]">
            <Grip cls="ml-[3px]" />
            <Combo cls="ml-[6px] w-[40px]" text="基础层" arrowCls="ml-[4px] w-[13px]" />
            <Combo cls="ml-[3px] w-[56px]" text="基础" arrowCls="w-[12px]" />
            <Combo cls="ml-[4px] w-[55px]" text="垫层" arrowCls="ml-[1px] w-[12px]" />
            <Combo cls="ml-[4px] w-[54px]" arrowCls="ml-[1px] w-[12px]" />
            <Combo cls="ml-[4px] w-[59px]" text="分层1" arrowCls="ml-[1px] w-[12px]" />
            <Sep cls="ml-[3px]" />
            <Tool cls="ml-[4px] w-[51px] h-[24px] gap-[4px] px-[3px] border border-[#777] rounded-[3px] bg-[#e6e6e6]" icon="attr" label="属性" />
            <Tool cls="ml-[2px] gap-[5px]" icon="list" label="构件列表" />
            <Tool cls="ml-[8px] gap-[3px]" icon="pick" label="拾取构件" />
            <Grip cls="ml-[8px]" />
            <Tool cls="ml-[6px] gap-[4px]" icon="two" label="两点" />
            <Tool cls="ml-[8px] gap-[3px]" icon="par" label="平行" />
            <Tool cls="ml-[7px] gap-[5px]" icon="len" label="长度标注" />
            <Tool cls="ml-[5px] gap-[4px]" icon="ali" label="对齐标注" />
            <Tool cls="ml-[7px] gap-[5px]" icon="meas" label="测量距离" />
          </div>
          <div className="h-[2px] shrink-0" />
          <div className="h-[27px] shrink-0 w-[1062px] flex items-center pb-[1px] bg-[#f1f1f3]">
            <Grip cls="ml-[3px]" />
            <Tool cls="ml-[5px] w-[51px] h-[23px] gap-[1px] pl-[4px] border border-[#8a8a8a] rounded-[3px] bg-[#e9e9ec]" icon="cursor" label="选择" />
            <Caret dark cls="ml-[1px]" />
            <Sep cls="ml-[3px]" />
            <Tool cls="ml-[8px] gap-[2px]" icon="cross" label="点" off />
            <Tool cls="ml-[6px] gap-[2px]" icon="rotp" label="旋转点" off />
            <Sep cls="ml-[6px]" />
            <Tool cls="ml-[9px] gap-[1px]" icon="line" label="直线" off />
            <Tool cls="ml-[8px] gap-[3px]" icon="rotp" label="点加长度" off />
            <Tool cls="ml-[7px] gap-[4px]" icon="arc" label="三点画弧" off />
            <Caret cls="ml-[5px]" />
            <Combo cls="ml-[4px] w-[41px]" arrowCls="w-[12px]" dim />
            <span className="ml-[6px] w-[14px] h-[13px] shrink-0 bg-[#e2e2e2] border border-[#c6c6c6]" />
            <span className="ml-[5px] text-[#8c8c8c] whitespace-nowrap">矩形</span>
            <Sep cls="ml-[7px]" />
            <Tool cls="ml-[5px] gap-[4px]" icon="smart" label="智能布置" off />
            <Caret cls="ml-[3px]" />
            <Sep cls="ml-[6px]" />
            <Tool cls="ml-[7px] gap-[2px]" icon="slope" label="三点定义斜垫层" />
            <Caret dark cls="ml-[3px]" />
            <Tool cls="ml-[4px] gap-[4px]" icon="top" label="查看垫层顶标高" />
            <Sep cls="ml-[6px]" />
            <Tool cls="ml-[4px] gap-[5px]" icon="auto" label="自动生成土方" />
            <Sep cls="ml-[7px]" />
            <Grip cls="ml-[1px]" />
            <Tool cls="ml-[6px] gap-[4px]" icon="model" label="从模型提取工程量" off />
          </div>

          {/* work area */}
          <div className="h-[851px] shrink-0 flex">
            <div className="w-[29px] shrink-0 h-[808px] flex flex-col items-center bg-[#f0f0f2]">
              <VI n="brush" cls="mt-[10px]" />
              <VS cls="mt-[6px]" />
              <VI n="copy" cls="mt-[5px]" />
              <VI n="mirror" cls="mt-[8px]" />
              <VS cls="mt-[4px]" />
              <VI n="move" cls="mt-[5px]" />
              <VI n="rot" cls="mt-[6px]" />
              <VS cls="mt-[6px]" />
              <VI n="ext" cls="mt-[7px]" />
              <VT t="延伸" cls="mt-[3px]" />
              <VI n="trim" cls="mt-[1px]" />
              <VT t="修剪" cls="mt-[3px]" />
              <VS cls="mt-[3px]" />
              <VI n="brk" cls="mt-[4px]" />
              <VT t="打断" />
              <VC cls="mt-[1px]" />
              <VI n="mrg" cls="mt-[2px]" />
              <VT t="合并" cls="mt-[4px]" />
              <VI n="spl" cls="mt-[3px]" />
              <VT t="分割" cls="mt-[5px]" />
              <VS cls="mt-[6px]" />
              <VI n="ali2" cls="mt-[7px]" />
              <VT t="对齐" cls="mt-[3px]" />
              <VC cls="mt-[1px]" />
              <VI n="off" cls="mt-[4px]" />
              <VT t="偏移" cls="mt-[2px]" />
              <VI n="str" cls="mt-[4px]" />
              <VT t="拉伸" cls="mt-[1px]" />
              <VS cls="mt-[3px]" />
              <VI n="grip" cls="mt-[6px]" />
              <VT t="设置夹点" cls="mt-[1px]" />
              <VS cls="mt-[1px]" />
              <VI n="cham" cls="mt-[5px]" />
              <VT t="倒角" cls="mt-[2px]" />
              <VI n="fil" />
              <VT t="圆角" cls="mt-[1px]" />
              <VS cls="mt-[8px]" />
              <VI n="close" cls="mt-[5px]" />
              <VT t="闭合" cls="mt-[4px]" />
            </div>
            <Canvas />
          </div>

          {/* bottom toolbars */}
          <div className="h-[28px] shrink-0 flex items-center">
            <div className="h-full w-[414px] shrink-0 flex items-center bg-[#f1f1f3] text-[#777]">
              <Grip cls="ml-[3px]" />
              <Combo cls="ml-[6px] w-[40px]" text="不偏移" arrowCls="ml-[3px] w-[13px]" dim />
              <Sep cls="ml-[4px]" />
              <span className="ml-[2px] w-[17px] shrink-0">X=</span>
              <Num cls="ml-[4px] w-[42px]" v="0" />
              <Spin cls="w-[13px]" />
              <span className="ml-[3px] w-[22px] shrink-0">mm</span>
              <span className="ml-[5px] w-[15px] shrink-0">Y=</span>
              <Num cls="ml-[4px] w-[42px]" v="0" />
              <Spin cls="ml-[1px] w-[12px]" />
              <span className="ml-[4px] w-[20px] shrink-0">mm</span>
              <Sep cls="ml-[5px]" />
              <span className="ml-[2px] w-[14px] h-[14px] shrink-0 border border-[#999] bg-[#e6e6e6]" />
              <span className="ml-[7px] text-[#111] whitespace-nowrap">旋转</span>
              <Num cls="ml-[5px] w-[52px]" v="0.000" />
              <Spin cls="ml-[1px] w-[12px]" />
              <span className="ml-[5px]">°</span>
            </div>
            <div className="ml-[63px] h-full w-[316px] shrink-0 flex items-center bg-[#f1f1f3]">
              <Grip cls="ml-[2px]" />
              <Tool cls="ml-[5px] gap-[3px]" icon="ortho" label="正交" off />
              <Tool cls="ml-[6px] gap-[3px]" icon="inter" label="交点" off />
              <Tool cls="ml-[8px] gap-[3px]" icon="perp" label="垂点" off />
              <Tool cls="ml-[6px] gap-[1px]" icon="mid" label="中点" off />
              <Tool cls="ml-[5px] gap-[4px]" icon="vert" label="顶点" off />
              <Tool cls="ml-[6px] gap-[2px]" icon="coord" label="坐标" off />
            </div>
          </div>
          <div className="h-[2px] shrink-0 bg-[#b4b4b4]" />
        </div>
      </div>

      {/* status bar (cut by the window edge) */}
      <div className="flex-1 min-h-0 overflow-hidden flex text-[#111] [font-family:'Liberation_Mono','Noto_Sans_CJK_SC',monospace] text-[11px]">
        <div className="w-[137px] shrink-0 pt-[5px] border-r border-[#bbb] whitespace-nowrap overflow-hidden">34548 Y=-10282</div>
        <div className="w-[80px] shrink-0 pt-[5px] pl-[3px] border-r border-[#bbb] whitespace-nowrap">层高:2.7m</div>
        <div className="w-[130px] shrink-0 pt-[5px] pl-[1px] border-r border-[#bbb] whitespace-nowrap">建筑底标高:-2.8m</div>
        <div className="w-[50px] shrink-0 pt-[5px] pl-[2px] border-r border-[#bbb]">0</div>
        <div className="w-[250px] shrink-0 border-r border-[#bbb]" />
        <div className="w-[1111px] shrink-0 pt-[5px] pl-[1042px]">896FPS</div>
        <div className="flex-1 border-l border-[#bbb]" />
      </div>
    </div>
  );
}
